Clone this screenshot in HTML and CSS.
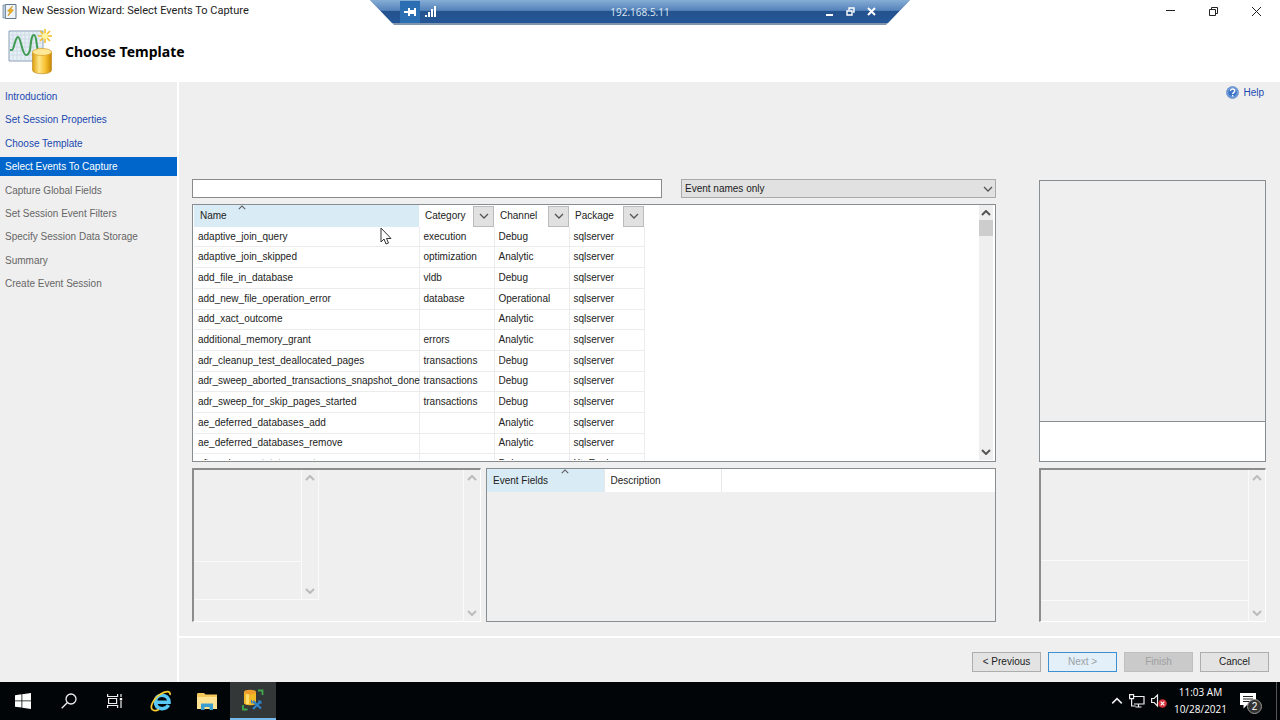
FILE: index.html
```html
<!DOCTYPE html>
<html lang="en">
<head>
    <meta charset="UTF-8">
    <meta name="viewport" content="width=device-width, initial-scale=1.0">
    <title>New Session Wizard: Select Events To Capture</title>
    <link rel="stylesheet" href="styles.css">
</head>
<body>
    <svg class="defs" aria-hidden="true">
        <symbol id="up" viewBox="0 0 10 6"><path d="M1 5 5 1 9 5"/></symbol>
        <symbol id="down" viewBox="0 0 10 6"><path d="M1 1 5 5 9 1"/></symbol>
    </svg>

    <!-- Remote desktop bar -->
    <div class="rdp">
        <div class="rdp-bar">
            <div class="rdp-side">
                <button class="pin" aria-label="Pin"><svg width="12" height="10" viewBox="0 0 12 10" fill="#fff"><path d="M0 4h4v2H0zM4 1h2v2h4V1h2v8h-2V7H6v2H4z"/></svg></button>
                <svg width="11" height="11" viewBox="0 0 11 11" fill="#fff"><path d="M0 9h2v2H0zM3 6h2v5H3zM6 3h2v8H6zM9 0h2v11H9z"/></svg>
            </div>
            <span>192.168.5.11</span>
            <div class="rdp-side rdp-right">
                <button aria-label="Minimize session"><svg width="9" height="9" viewBox="0 0 9 9"><path d="M1 8h7" stroke="#fff" stroke-width="2"/></svg></button>
                <button aria-label="Restore session"><svg width="9" height="9" viewBox="0 0 9 9"><path d="M1 4h5v4H1zM3 3V1h5v4H7M1 4h5" stroke="#fff" stroke-width="1.4" fill="none"/></svg></button>
                <button aria-label="Close session"><svg width="9" height="9" viewBox="0 0 9 9"><path d="m1 1 7 7M8 1 1 8" stroke="#fff" stroke-width="2"/></svg></button>
            </div>
        </div>
    </div>

    <header>
        <div class="titlebar">
            <svg width="15" height="15" viewBox="0 0 15 15">
                <path d="M3.500.5h10.500v14H3.500z" fill="#eef4fa" stroke="#61778c"/>
                <path d="M1 1h2.500v13H1z" fill="#b9cddd" stroke="#71869a" stroke-width=".7"/>
                <path d="m10.500 2-5 5 2.500.5-2 4.500 5.500-6L8.800 5.500z" fill="#f0b41c" stroke="#c58a10" stroke-width=".6"/>
            </svg>
            <span class="title">New Session Wizard: Select Events To Capture</span>
            <div class="winbtns">
                <button aria-label="Minimize"><svg width="11" height="11" viewBox="0 0 11 11"><path d="M1 4.500h9"/></svg></button>
                <button aria-label="Restore"><svg width="11" height="11" viewBox="0 0 11 11"><path d="M1.500 3.500h6v6h-6zM3.500 3.500v-2h6v6h-2"/></svg></button>
                <button aria-label="Close"><svg width="11" height="11" viewBox="0 0 11 11"><path d="m1 1 9 9M10 1 1 10"/></svg></button>
            </div>
        </div>
        <div class="banner">
            <svg width="46" height="46" viewBox="0 0 46 46">
                <defs>
                    <linearGradient id="gold"><stop offset="0" stop-color="#dd9f0e"/><stop offset=".35" stop-color="#ffe688"/><stop offset=".7" stop-color="#f4bd2c"/><stop offset="1" stop-color="#c88606"/></linearGradient>
                </defs>
                <path d="M1 2h34v30H1z" fill="#e6eef6" stroke="#8a9fb5"/>
                <path d="M5 2v30M9 2v30M13 2v30M17 2v30M21 2v30M25 2v30M29 2v30M1 6h34M1 10h34M1 14h34M1 18h34M1 22h34M1 26h34" stroke="#c3d1de" stroke-width=".6"/>
                <path d="M2 21h2c2 0 3-13 6-13s4 18 8 18c2 0 3-1 4-5 1-6 1-15 4-15s2 14 5 17" fill="none" stroke="#3f9b52" stroke-width="2"/>
                <path d="M37 0v14M30 7h14M32 2l10 10M42 2 32 12" stroke="#f0bd27" stroke-width="1.600"/>
                <circle cx="37" cy="7" r="3" fill="#fff4a0"/>
                <path d="M24.500 23v18c0 5 19 5 19 0V23z" fill="url(#gold)" stroke="#bb8514" stroke-width=".6"/>
                <ellipse cx="34" cy="23" rx="9.500" ry="3.500" fill="#ffe999" stroke="#dba42c" stroke-width=".8"/>
            </svg>
            <h1>Choose Template</h1>
        </div>
    </header>

    <div class="wizard">
        <nav>
            <ul>
                <li><a href="#">Introduction</a></li>
                <li><a href="#">Set Session Properties</a></li>
                <li><a href="#">Choose Template</a></li>
                <li class="current">Select Events To Capture</li>
                <li>Capture Global Fields</li>
                <li>Set Session Event Filters</li>
                <li>Specify Session Data Storage</li>
                <li>Summary</li>
                <li>Create Event Session</li>
            </ul>
        </nav>

        <div class="page">
            <main>
                <div class="help">
                    <a href="#">
                        <svg width="13" height="13" viewBox="0 0 13 13"><circle cx="6.500" cy="6.500" r="6" fill="#3c74c8" stroke="#7f9fce"/><circle cx="6.500" cy="6.500" r="4.800" fill="none" stroke="#a9c8f0" stroke-width=".7"/><path d="M4.500 5c0-2.800 4.200-2.600 4.200 0 0 1.600-2.100 1.500-2.100 3M6.600 9v1.500" fill="none" stroke="#fff" stroke-width="1.400"/></svg>
                        Help
                    </a>
                </div>

                <div class="panels">
                    <div class="left">
                        <div class="filters">
                            <input type="text" aria-label="Search events">
                            <div class="scope">
                                <select aria-label="Search scope"><option>Event names only</option></select>
                                <svg class="chev" width="10" height="6"><use href="#down"/></svg>
                            </div>
                        </div>

                        <div class="events">
                            <div class="rows">
                                <table>
                                    <colgroup><col class="cname"><col class="cother"><col class="cother"><col class="cother"></colgroup>
                                    <thead>
                                        <tr>
                                            <th class="sorted">Name<svg class="chev sort" width="8" height="5"><use href="#up"/></svg></th>
                                            <th><div class="th">Category<button aria-label="Filter category"><svg class="chev" width="10" height="6"><use href="#down"/></svg></button></div></th>
                                            <th><div class="th">Channel<button aria-label="Filter channel"><svg class="chev" width="10" height="6"><use href="#down"/></svg></button></div></th>
                                            <th><div class="th">Package<button aria-label="Filter package"><svg class="chev" width="10" height="6"><use href="#down"/></svg></button></div></th>
                                        </tr>
                                    </thead>
                                    <tbody>
                                        <tr><td>adaptive_join_query</td><td>execution</td><td>Debug</td><td>sqlserver</td></tr>
                                        <tr><td>adaptive_join_skipped</td><td>optimization</td><td>Analytic</td><td>sqlserver</td></tr>
                                        <tr><td>add_file_in_database</td><td>vldb</td><td>Debug</td><td>sqlserver</td></tr>
                                        <tr><td>add_new_file_operation_error</td><td>database</td><td>Operational</td><td>sqlserver</td></tr>
                                        <tr><td>add_xact_outcome</td><td></td><td>Analytic</td><td>sqlserver</td></tr>
                                        <tr><td>additional_memory_grant</td><td>errors</td><td>Analytic</td><td>sqlserver</td></tr>
                                        <tr><td>adr_cleanup_test_deallocated_pages</td><td>transactions</td><td>Debug</td><td>sqlserver</td></tr>
                                        <tr><td>adr_sweep_aborted_transactions_snapshot_done</td><td>transactions</td><td>Debug</td><td>sqlserver</td></tr>
                                        <tr><td>adr_sweep_for_skip_pages_started</td><td>transactions</td><td>Debug</td><td>sqlserver</td></tr>
                                        <tr><td>ae_deferred_databases_add</td><td></td><td>Analytic</td><td>sqlserver</td></tr>
                                        <tr><td>ae_deferred_databases_remove</td><td></td><td>Analytic</td><td>sqlserver</td></tr>
                                        <tr><td>after_changestatetx_event</td><td></td><td>Debug</td><td>XtpEngine</td></tr>
                                    </tbody>
                                </table>
                            </div>
                            <div class="scroll">
                                <svg class="chev" width="10" height="6"><use href="#up"/></svg>
                                <div class="thumb"></div>
                                <svg class="chev" width="10" height="6"><use href="#down"/></svg>
                            </div>
                            <svg class="cursor" width="12" height="18" viewBox="0 0 12 18"><path d="M1 1v14l3-3 2 5 2.500-1-2-4.500H11z" fill="#fff" stroke="#333"/></svg>
                        </div>

                        <div class="details">
                            <div class="sunken">
                                <div class="inner">
                                    <div class="lines"><div></div><div></div></div>
                                    <div class="scroll off">
                                        <svg class="chev" width="10" height="6"><use href="#up"/></svg>
                                        <svg class="chev" width="10" height="6"><use href="#down"/></svg>
                                    </div>
                                </div>
                                <div class="scroll off">
                                    <svg class="chev" width="10" height="6"><use href="#up"/></svg>
                                    <svg class="chev" width="10" height="6"><use href="#down"/></svg>
                                </div>
                            </div>
                            <div class="fields">
                                <table>
                                    <thead>
                                        <tr>
                                            <th class="sorted">Event Fields<svg class="chev sort" width="8" height="5"><use href="#up"/></svg></th>
                                            <th>Description</th>
                                            <th class="rest"></th>
                                        </tr>
                                    </thead>
                                </table>
                            </div>
                        </div>
                    </div>

                    <div class="right">
                        <div class="selected"><div></div><div class="note"></div></div>
                        <div class="sunken">
                            <div class="lines three"><div></div><div></div><div></div></div>
                            <div class="scroll off">
                                <svg class="chev" width="10" height="6"><use href="#up"/></svg>
                                <svg class="chev" width="10" height="6"><use href="#down"/></svg>
                            </div>
                        </div>
                    </div>
                </div>
            </main>

            <footer>
                <button class="btn">&lt; Previous</button>
                <button class="btn next">Next &gt;</button>
                <button class="btn finish" disabled>Finish</button>
                <button class="btn">Cancel</button>
            </footer>
        </div>
    </div>

    <div class="taskbar">
        <div class="apps">
            <button aria-label="Start"><svg width="16" height="16" viewBox="0 0 16 16" fill="#fff"><path d="M0 2.200 6.500 1.300v6.200H0zM7.300 1.200 16 0v7.500H7.300zM0 8.300h6.500v6.300L0 13.700zM7.300 8.300H16V16l-8.700-1.200z"/></svg></button>
            <button aria-label="Search"><svg width="16" height="16" viewBox="0 0 16 16" fill="none" stroke="#eee" stroke-width="1.300"><circle cx="10" cy="6" r="5"/><path d="M6.500 9.500.7 15.300"/></svg></button>
            <button aria-label="Task View"><svg width="16" height="16" viewBox="0 0 16 16" fill="none" stroke="#eee" stroke-width="1.200"><path d="M.6 1v2.500h10V1M1.600 5.500h8v5h-8zM.6 15v-2.500h10V15M14 1v3M14 8v7"/><path d="M12.800 5h2.400v2.400h-2.400z" fill="#fff" stroke="none"/></svg></button>
            <button aria-label="Internet Explorer"><svg width="22" height="22" viewBox="0 0 22 22" fill="none"><path d="M18.500 15c-3 5.500-13 5.200-13-3.500 0-8.500 13.500-8.500 13.500.8H7" stroke="#58c8f4" stroke-width="3.600"/><path d="M4 20.500C-2 19 3 9 10 4.500 15 1 21 0 20 5M4 20.500c2 .4 4-.5 5-1" stroke="#f5cd33" stroke-width="1.700"/></svg></button>
            <button aria-label="File Explorer"><svg width="20" height="17" viewBox="0 0 20 17"><path d="M0 1.500C0 .5.500 0 1.500 0H7l1.500 1.500H20V16H0z" fill="#f3c75a"/><path d="M0 4h20v12H0z" fill="#ffe292"/><path d="M4 17v-6.500h12V17h-3.500v-3h-5v3z" fill="#3a9fd0"/></svg></button>
            <button class="active" aria-label="SQL Server Management Studio"><svg width="22" height="22" viewBox="0 0 22 22"><path d="M2 3v11c0 3 12 3 12 0V3z" fill="#f2b826"/><path d="M4 3v12h3V3z" fill="#ffdc6c"/><ellipse cx="8" cy="3" rx="6" ry="2.300" fill="#ef9e2c"/><path d="M16 1.500h4.500V6M1 16v4.500h4.500" fill="none" stroke="#40a84b" stroke-width="1.800"/><path d="m11 12 8 7.500M19 12l-8 8" stroke="#2f83c9" stroke-width="2.200"/><path d="M9.500 11v3h3M17 11v3h3" fill="none" stroke="#2f83c9"/></svg></button>
        </div>
        <div class="tray">
            <svg class="chev light" width="12" height="8"><use href="#up"/></svg>
            <svg width="16" height="14" viewBox="0 0 16 14" fill="none" stroke="#eee" stroke-width="1.200"><path d="M5 2.500h10v7.500H5M9.500 10v3M6.500 13h6M.6.600h4v4h-4zM2.600 4.600v7.400h4"/></svg>
            <svg width="16" height="14" viewBox="0 0 16 14"><path d="M.6 4.500h2.500L6.500 1v11L3.100 8.500H.6z" fill="none" stroke="#eee" stroke-width="1.200"/><circle cx="11.500" cy="9.500" r="4.300" fill="#d5303a"/><path d="m9.700 7.700 3.600 3.600M13.300 7.700l-3.600 3.600" stroke="#fff" stroke-width="1.200"/></svg>
            <div class="clock"><div>11:03 AM</div><div>10/28/2021</div></div>
            <div class="notif">
                <svg width="16" height="16" viewBox="0 0 16 16"><path d="M0 0h16v12H7l-3.500 3.500V12H0z" fill="#fff"/><path d="M3 3.500h10M3 6h10M3 8.500h10" stroke="#222"/></svg>
                <span class="badge">2</span>
            </div>
            <div class="peek"></div>
        </div>
    </div>
</body>
</html>
```
FILE: styles.css
```css
* {
    margin: 0;
    padding: 0;
    box-sizing: border-box;
}
html,body {
    height: 100%;
}
body {
    display: flex;
    flex-direction: column;
    overflow: hidden;
    background-color: #fff;
    color: #222;
    font-family: "Liberation Sans", Arial, sans-serif;
    font-size: 10px;
    line-height: 14px;
}
button, input, select {
    font: inherit;
    color: inherit;
}
button {
    border: none;
    background: none;
}
svg {
    display: block;
    flex-shrink: 0;
}
ul {
    list-style: none;
}
a {
    color: #1a49b0;
    text-decoration: none;
}
.defs {
    position: absolute;
    width: 0;
    height: 0;
}
.chev {
    fill: none;
    stroke: #555;
    stroke-width: 1.3;
}

/* Remote desktop bar */
.rdp {
    position: absolute;
    top: 0;
    left: 50%;
    width: 540px;
    height: 25px;
    margin-left: -270px;
    background-color: #8295ae;
    clip-path: polygon(0 0, 100% 0, 516px 100%, 24px 100%);
}
.rdp-bar {
    display: flex;
    justify-content: space-between;
    align-items: center;
    height: 23px;
    padding: 0 30px;
    background: linear-gradient(#86add5, #5583ba 45%, #24538f 50%, #245696);
    color: #dfe9f5;
    font-family: "Open Sans", sans-serif;
}
.rdp-side {
    display: flex;
    align-items: center;
    gap: 5px;
    width: 80px;
}
.rdp-right {
    justify-content: flex-end;
    gap: 12px;
    padding-right: 4px;
}
.pin {
    padding: 6px 4px;
    background-color: #2c6eb2;
}

/* Header */
.titlebar {
    display: flex;
    align-items: center;
    gap: 5px;
    height: 22px;
    padding: 0 18px 0 2px;
}
.title {
    flex: 1;
    font-family: Roboto, sans-serif;
    font-size: 11px;
}
.winbtns {
    display: flex;
    gap: 32px;
}
.winbtns svg {
    fill: none;
    stroke: #222;
}
.banner {
    display: flex;
    align-items: center;
    gap: 11px;
    height: 60px;
    padding: 0 8px;
}
.banner h1 {
    color: #000;
    font-family: "Noto Sans", sans-serif;
    font-size: 14px;
    line-height: 20px;
}

/* Wizard */
.wizard {
    flex: 1;
    display: flex;
    min-height: 0;
    background-color: #efefef;
}
nav {
    width: 179px;
    padding-top: 5px;
    border-right: 2px solid #fff;
}
nav ul {
    display: flex;
    flex-direction: column;
    justify-content: space-between;
    height: 206px;
}
nav li {
    padding: 3px 5px 2px;
    color: #666;
}
nav .current {
    background-color: #0066cc;
    color: #fff;
}
.page {
    flex: 1;
    display: flex;
    flex-direction: column;
    min-width: 0;
}
main {
    flex: 1;
    display: flex;
    flex-direction: column;
    min-height: 0;
    padding: 3px 14px 14px 13px;
}
.help {
    display: flex;
    justify-content: flex-end;
    height: 94px;
    padding-right: 2px;
}
.help a {
    display: flex;
    align-items: center;
    gap: 4px;
    height: 15px;
}
.panels {
    flex: 1;
    display: grid;
    grid-template-columns: 804fr 227fr;
    gap: 43px;
    min-height: 0;
}
.left, .right {
    display: flex;
    flex-direction: column;
    gap: 6px;
    min-width: 0;
    min-height: 0;
}
.filters {
    display: grid;
    grid-template-columns: 470fr 315fr;
    gap: 19px;
}
.filters input {
    height: 19px;
    padding: 0 4px;
    border: 1px solid #8a8a8a;
    background-color: #fff;
    min-width: 0;
}
.scope {
    position: relative;
}
.scope select {
    appearance: none;
    width: 100%;
    height: 19px;
    padding: 0 3px;
    border: 1px solid #a9a9a9;
    border-radius: 0;
    background-color: #e1e1e1;
}
.scope .chev {
    position: absolute;
    top: 7px;
    right: 3px;
}

/* Tables */
table {
    border-collapse: collapse;
    table-layout: fixed;
}
th {
    padding: 0 0 0 6px;
    text-align: left;
    font-weight: normal;
    background-color: #fff;
}
.sorted {
    position: relative;
    background-color: #d9ebf5;
}
.sort {
    position: absolute;
    top: 0;
    left: 44px;
}
.events {
    flex: 1;
    display: flex;
    justify-content: space-between;
    position: relative;
    min-height: 0;
    padding: 0 2px 1px 1px;
    border: 1px solid #888d92;
    background-color: #fff;
}
.rows {
    overflow: hidden;
}
.rows table {
    width: 450px;
    height: 270px;
}
.rows th {
    height: 22px;
}
.cname {
    width: 225px;
}
.cother {
    width: 75px;
}
.th {
    display: flex;
    align-items: center;
    justify-content: space-between;
}
.th button {
    display: flex;
    align-items: center;
    justify-content: center;
    width: 21px;
    height: 21px;
    border: 1px solid #bbb;
    background-color: #e1e1e1;
}
td {
    padding: 0 0 0 4px;
    border-right: 1px solid #ececec;
    border-bottom: 1px solid #ececec;
    white-space: nowrap;
}
.scroll {
    display: flex;
    flex-direction: column;
    align-items: center;
    width: 14px;
    padding: 5px 0;
    background-color: #efefef;
}
.scroll .chev:last-child {
    margin-top: auto;
}
.scroll .chev {
    stroke-width: 2;
}
.thumb {
    width: 14px;
    height: 16px;
    margin-top: 4px;
    background-color: #cdcdcd;
}
.cursor {
    position: absolute;
    top: 22px;
    left: 187px;
}

/* Lower panels */
.details {
    display: grid;
    grid-template-columns: 289fr 510fr;
    gap: 5px;
    height: 154px;
}
.sunken {
    display: flex;
    justify-content: space-between;
    height: 154px;
    border: 1px solid #fff;
    border-top: 2px solid #8c8c8c;
    border-left: 2px solid #8c8c8c;
}
.off {
    width: 17px;
    border-left: 1px solid #fafafa;
}
.off .chev {
    stroke: #bbb;
}
.inner {
    display: flex;
    width: 125px;
    height: 130px;
    border-right: 1px solid #fafafa;
    border-bottom: 1px solid #fafafa;
}
.lines {
    flex: 1;
    display: grid;
    grid-template-rows: 92fr 38fr;
}
.lines div + div {
    border-top: 1px solid #fafafa;
}
.three {
    grid-template-rows: 91fr 40fr 21fr;
}
.fields {
    border: 1px solid #888d92;
}
.fields table {
    width: 100%;
}
.fields th {
    width: 117px;
    height: 23px;
    border-right: 1px solid #e8e8e8;
}
.fields .rest {
    width: auto;
    border: none;
}
.fields .sort {
    left: 74px;
}
.selected {
    flex: 1;
    display: grid;
    grid-template-rows: 1fr 40px;
    margin-top: 1px;
    border: 1px solid #888d92;
}
.note {
    border-top: 1px solid #888d92;
    background-color: #fff;
}

/* Wizard buttons */
footer {
    display: flex;
    justify-content: flex-end;
    gap: 7px;
    padding: 14px 11px 10px;
    border-top: 2px solid #fff;
}
.btn {
    width: 69px;
    height: 20px;
    border: 1px solid #adadad;
    background-color: #e3e3e3;
}
.next {
    border-color: #3c8fd0;
    background-color: #e3f0f9;
    color: #9a9fa5;
}
.finish {
    border-color: #bfbfbf;
    background-color: #cacaca;
    color: #a0a0a0;
}

/* Taskbar */
.taskbar {
    display: flex;
    justify-content: space-between;
    height: 38px;
    background-color: #020507;
    color: #fff;
}
.apps {
    display: flex;
}
.apps button {
    display: flex;
    align-items: center;
    justify-content: center;
    width: 46px;
}
.apps .active {
    background-color: #333738;
    border-bottom: 2px solid #76b9ed;
}
.tray {
    display: flex;
    align-items: center;
    gap: 6px;
}
.light {
    stroke: #eee;
}
.clock {
    padding-left: 1px;
    font-family: "Open Sans", sans-serif;
    line-height: 17px;
    text-align: center;
}
.notif {
    position: relative;
    margin: 0 14px 0 7px;
}
.badge {
    position: absolute;
    top: 6px;
    left: 7px;
    width: 15px;
    height: 15px;
    border: 1px solid #999;
    border-radius: 50%;
    background-color: #333;
    line-height: 13px;
    text-align: center;
}
.peek {
    width: 4px;
    height: 38px;
    border-left: 1px solid #555;
}
```
